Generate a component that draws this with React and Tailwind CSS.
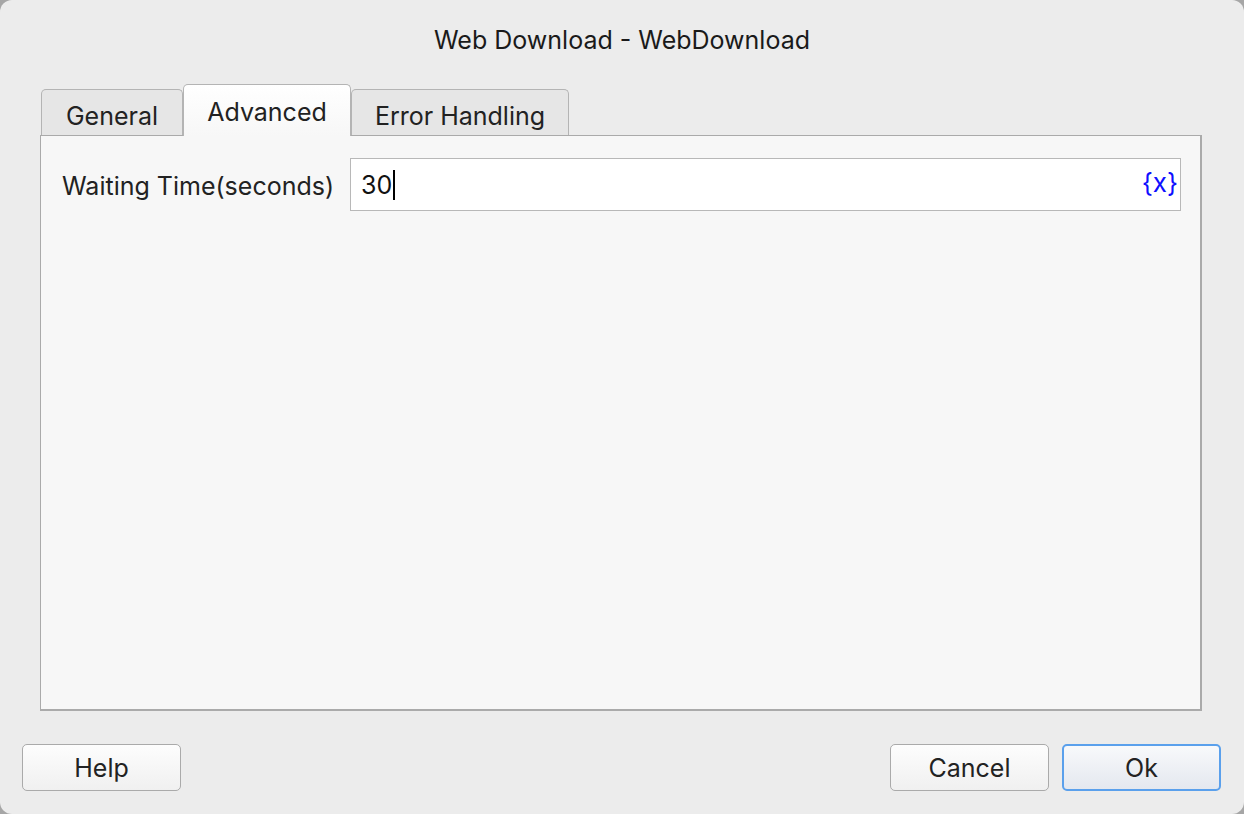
export default function App() {
  const font = { fontFamily: '"Inter", "Liberation Sans", sans-serif' };
  return (
    <div className="w-[1244px] h-[814px] bg-[#a6a6a6]" style={font}>
      <div className="w-full h-full rounded-[12px] bg-[#ececec] flex flex-col text-[#222]">
        <div className="h-[84px] flex justify-center pt-[24px]">
          <span className="text-[25px] leading-[32px] text-[#1a1a1a]">Web Download - WebDownload</span>
        </div>
        <div className="h-[51px] flex items-end pl-[41px] relative z-10">
          <div className="w-[142px] h-[46px] border border-b-0 border-[#b4b4b4] rounded-t-[5px] bg-[#e6e6e6] flex items-center justify-center text-[25px] leading-[32px] pt-[6px]">General</div>
          <div className="w-[168px] h-[52px] -mb-[1px] border border-b-0 border-[#b4b4b4] rounded-t-[5px] bg-gradient-to-b from-[#ffffff] to-[#f7f7f7] flex items-center justify-center text-[25px] leading-[32px] pt-[2px]">Advanced</div>
          <div className="w-[218px] h-[46px] border border-b-0 border-[#b4b4b4] rounded-t-[5px] bg-[#e6e6e6] flex items-center justify-center text-[25px] leading-[32px] pt-[6px]">Error Handling</div>
        </div>
        <div className="ml-[40px] w-[1162px] h-[576px] border border-[#aaaaaa] border-r-2 border-b-2 bg-[#f7f7f7] pt-[22px] pl-[21px] pr-[19px]">
          <div className="flex items-center">
            <span className="w-[288px] text-[25px] leading-[32px] pt-[2px]">Waiting Time(seconds)</span>
            <div className="flex-1 h-[53px] bg-white border border-[#b8b8b8] flex items-center pl-[10px] pr-[2px]">
              <span className="text-[25px] leading-[32px] text-[#111]">30</span>
              <span className="w-[2px] h-[30px] bg-black ml-[1px]"></span>
              <span className="ml-auto text-[26px] leading-[32px] text-[#0f0fff] -mt-[3px]">{'{x}'}</span>
            </div>
          </div>
        </div>
        <div className="mt-[33px] h-[47px] flex px-[22px]">
          <button className="w-[159px] h-[47px] rounded-[5px] border border-[#aaaaaa] bg-gradient-to-b from-[#fdfdfd] to-[#f0f0f0] text-[25px] leading-[32px]">Help</button>
          <div className="flex-1"></div>
          <button className="w-[159px] h-[47px] rounded-[5px] border border-[#aaaaaa] bg-gradient-to-b from-[#fdfdfd] to-[#f0f0f0] text-[25px] leading-[32px]">Cancel</button>
          <button className="ml-[13px] mr-[1px] w-[159px] h-[47px] rounded-[5px] border-2 border-[#5aa0ec] bg-gradient-to-b from-[#f8f9fb] to-[#e4e8ef] text-[25px] leading-[32px]">Ok</button>
        </div>
      </div>
    </div>
  );
}
